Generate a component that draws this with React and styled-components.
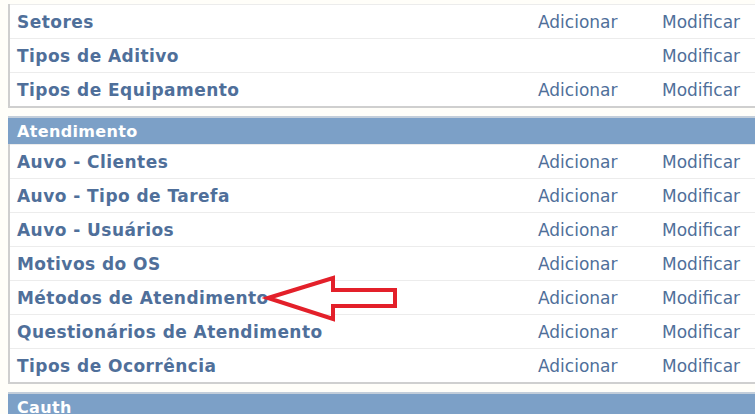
import React from 'react';
import styled, { createGlobalStyle } from 'styled-components';

const GlobalStyle = createGlobalStyle`
  html, body {
    margin: 0;
    padding: 0;
    background: #fffef9;
    overflow: hidden;
  }
  body {
    font-family: "DejaVu Sans", Verdana, sans-serif;
  }
`;

const Page = styled.div`
  position: relative;
  width: 800px;
  padding: 4px 0 0 8px;
  display: flex;
  flex-direction: column;
  gap: 8px;
`;

const Module = styled.div`
  display: flex;
  flex-direction: column;
`;

const Caption = styled.div`
  border-top: 2px solid #c3ceda;
  background: #7ca0c7;
  color: #fff;
  font-weight: bold;
  font-size: 16px;
  letter-spacing: 0.35px;
  height: 28px;
  box-sizing: border-box;
  padding: 1px 0 0 9px;
  display: flex;
  align-items: center;
`;

const Rows = styled.div`
  border-left: 2px solid #cfcfcf;
  border-bottom: 2px solid #cfcfcf;
  background: #fff;
`;

const Row = styled.div`
  display: grid;
  grid-template-columns: 521px 124px 1fr;
  height: 34px;
  box-sizing: border-box;
  border-top: 1px solid #ececec;
  align-items: center;
`;

const Cell = styled.a`
  padding: 1px 0 0 7px;
  color: #4f6f9a;
  text-decoration: none;
  font-size: 17px;
  font-weight: ${(p) => (p.$bold ? 'bold' : 'normal')};
  letter-spacing: ${(p) => (p.$bold ? '0.45px' : '0')};
  white-space: nowrap;
`;

const Arrow = styled.svg`
  position: absolute;
  left: 0;
  top: 0;
  pointer-events: none;
`;

const modules = [
  {
    name: null,
    models: [
      ['Setores', true],
      ['Tipos de Aditivo', false],
      ['Tipos de Equipamento', true],
    ],
  },
  {
    name: 'Atendimento',
    models: [
      ['Auvo - Clientes', true],
      ['Auvo - Tipo de Tarefa', true],
      ['Auvo - Usuários', true],
      ['Motivos do OS', true],
      ['Métodos de Atendimento', true],
      ['Questionários de Atendimento', true],
      ['Tipos de Ocorrência', true],
    ],
  },
  { name: 'Cauth', models: [] },
];

export default function App() {
  return (
    <>
      <GlobalStyle />
      <Page>
        {modules.map((m, i) => (
          <Module key={i}>
            {m.name && <Caption>{m.name}</Caption>}
            {m.models.length > 0 && (
              <Rows>
                {m.models.map(([label, canAdd]) => (
                  <Row key={label}>
                    <Cell $bold href="#">{label}</Cell>
                    <span>{canAdd && <Cell href="#">Adicionar</Cell>}</span>
                    <Cell href="#">Modificar</Cell>
                  </Row>
                ))}
              </Rows>
            )}
          </Module>
        ))}
        <Arrow width="755" height="414" viewBox="0 0 755 414">
          <path
            d="M268 298 L333 278 L333 290 L395 290 L395 306 L333 306 L333 319 Z"
            fill="none"
            stroke="#e3202a"
            strokeWidth="4"
            strokeLinejoin="miter"
          />
        </Arrow>
      </Page>
    </>
  );
}
